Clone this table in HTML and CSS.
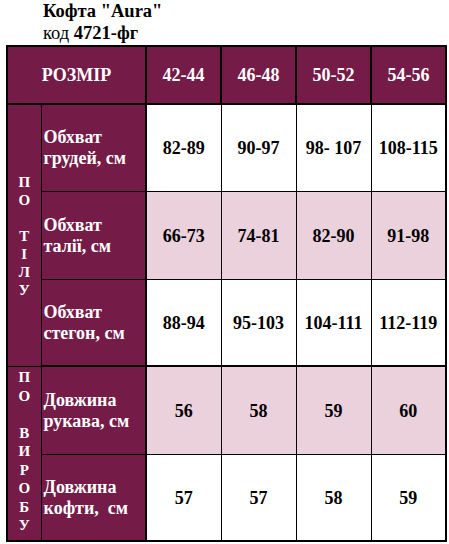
FILE: index.html
```html
<!DOCTYPE html>
<html lang="uk">
<head>
<meta charset="utf-8">
<title>Кофта "Aura"</title>
<link rel="stylesheet" href="styles.css">
</head>
<body>
<div class="page">
  <div class="title">
    <div class="name">Кофта "Aura"</div>
    <div class="code">код <b>4721-фг</b></div>
  </div>
  <table class="sizes">
    <colgroup>
      <col class="c-sec">
      <col class="c-lab">
      <col class="c-val">
      <col class="c-val">
      <col class="c-val">
      <col class="c-val">
    </colgroup>
    <thead>
      <tr class="r-head">
        <th colspan="2">РОЗМІР</th>
        <th>42-44</th>
        <th>46-48</th>
        <th>50-52</th>
        <th>54-56</th>
      </tr>
    </thead>
    <tbody>
      <tr class="r1">
        <td class="sec" rowspan="3"><div class="vert">П<br>О<br>&nbsp;<br>Т<br>І<br>Л<br>У</div></td>
        <td class="lab">Обхват<br>грудей, см</td>
        <td class="val">82-89</td>
        <td class="val">90-97</td>
        <td class="val">98-&nbsp;107</td>
        <td class="val">108-115</td>
      </tr>
      <tr class="r2 pink">
        <td class="lab">Обхват<br>талії, см</td>
        <td class="val">66-73</td>
        <td class="val">74-81</td>
        <td class="val">82-90</td>
        <td class="val">91-98</td>
      </tr>
      <tr class="r3 end">
        <td class="lab">Обхват<br>стегон, см</td>
        <td class="val">88-94</td>
        <td class="val">95-103</td>
        <td class="val">104-111</td>
        <td class="val">112-119</td>
      </tr>
      <tr class="r4 pink">
        <td class="sec" rowspan="2"><div class="vert vert-long">П<br>О<br>&nbsp;<br>В<br>И<br>Р<br>О<br>Б<br>У</div></td>
        <td class="lab">Довжина<br>рукава, см</td>
        <td class="val">56</td>
        <td class="val">58</td>
        <td class="val">59</td>
        <td class="val">60</td>
      </tr>
      <tr class="r5">
        <td class="lab">Довжина<br>кофти,&nbsp; см</td>
        <td class="val">57</td>
        <td class="val">57</td>
        <td class="val">58</td>
        <td class="val">59</td>
      </tr>
    </tbody>
  </table>
</div>
</body>
</html>
```

FILE: styles.css
```css
html, body {
  margin: 0;
  padding: 0;
  background: #ffffff;
}

body {
  font-family: "Liberation Serif", "Times New Roman", serif;
  color: #000000;
}

.page {
  padding-left: 6px;
}

.title {
  margin-left: 37px;
  font-size: 18.5px;
  line-height: 22px;
  height: 44px;
}

.name {
  font-weight: bold;
}

.code b {
  font-weight: bold;
}

.sizes {
  border-collapse: collapse;
  table-layout: fixed;
  width: 439px;
  margin-top: 1px;
  border: 2px solid #000;
}

.c-sec { width: 34px; }
.c-lab { width: 105px; }
.c-val { width: 75px; }

.sizes th,
.sizes td {
  border: 1px solid #000;
  padding: 0;
}

.r-head th {
  height: 56px;
  background: #741b47;
  color: #ffffff;
  font-size: 18px;
  font-weight: bold;
  text-align: center;
  border: 2px solid #000;
}

.r1 td { height: 86px; }
.r2 td { height: 87px; }
.r3 td { height: 85px; }
.r4 td { height: 87px; }
.r5 td { height: 85px; }

.sec {
  background: #741b47;
  border-right: 2px solid #000;
  border-bottom: 2px solid #000;
  text-align: center;
  vertical-align: middle;
}

.vert {
  color: #ffffff;
  font-size: 15px;
  font-weight: bold;
  line-height: 18px;
  padding-top: 2px;
}

.vert-long {
  line-height: 18.5px;
  padding-top: 0;
  padding-bottom: 4px;
}

.sizes .lab {
  background: #741b47;
  color: #ffffff;
  font-size: 18px;
  font-weight: bold;
  line-height: 21px;
  text-align: left;
  vertical-align: middle;
  padding-left: 2px;
  border-right: 2px solid #000;
}

.val {
  background: #ffffff;
  font-size: 18px;
  font-weight: bold;
  line-height: 22px;
  text-align: center;
  vertical-align: middle;
}

.pink .val {
  background: #ead1dc;
}

.end td {
  border-bottom: 2px solid #000;
}
```
